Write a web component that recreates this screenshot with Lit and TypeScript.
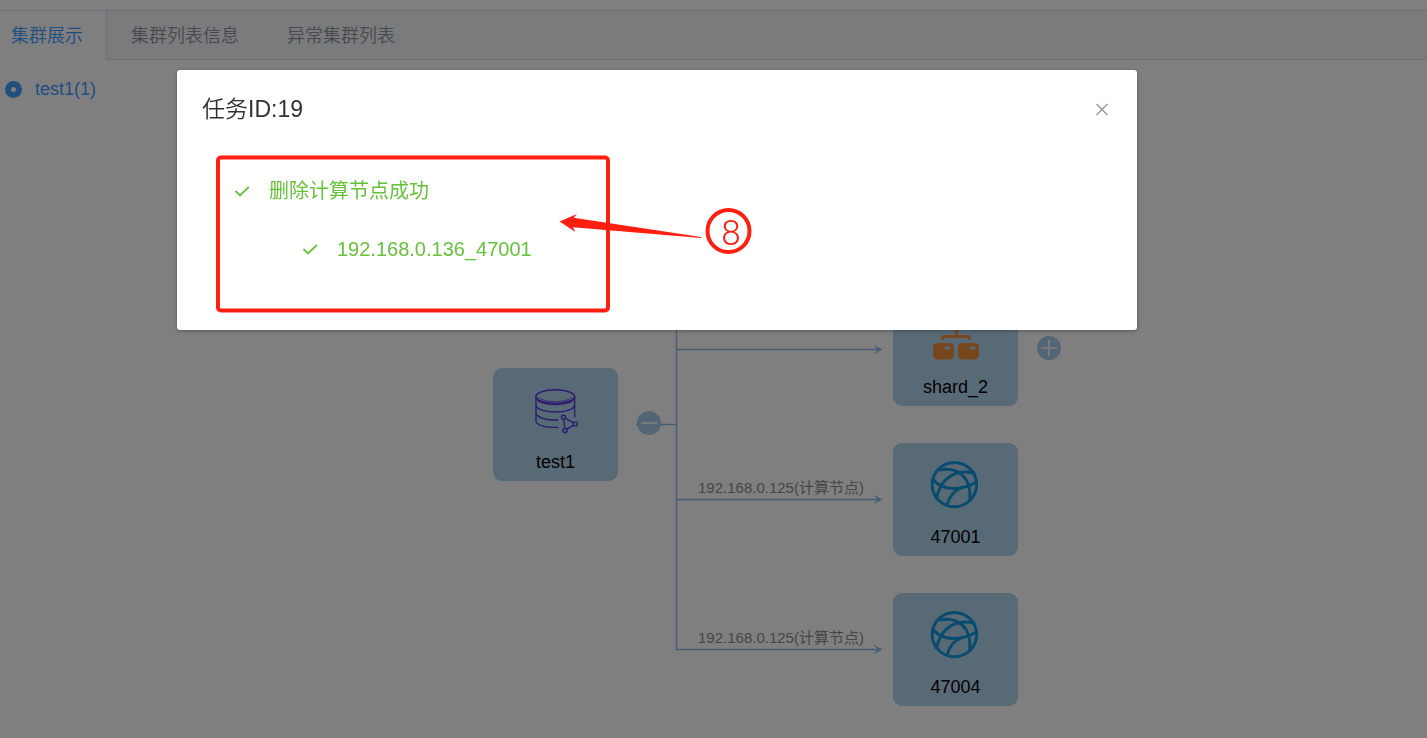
import { LitElement, html, css, svg } from "lit";
import { customElement, state } from "lit/decorators.js";
import { classMap } from "lit/directives/class-map.js";
import { styleMap } from "lit/directives/style-map.js";

type Kind = "cluster" | "shard" | "compute";

interface TopologyNode {
  x: number;
  y: number;
  kind: Kind;
  label: string;
}

interface EdgeLabel {
  x: number;
  y: number;
  text: string;
}

const NODES: TopologyNode[] = [
  { x: 313, y: 308, kind: "cluster", label: "test1" },
  { x: 713, y: 233, kind: "shard", label: "shard_2" },
  { x: 713, y: 383, kind: "compute", label: "47001" },
  { x: 713, y: 533, kind: "compute", label: "47004" },
];

const EDGE_LABELS: EdgeLabel[] = [
  { x: 518, y: 418, text: "192.168.0.125(计算节点)" },
  { x: 518, y: 568, text: "192.168.0.125(计算节点)" },
];

const EDGE_ROWS = [289, 439, 589];

const place = (x: number, y: number) => styleMap({ left: `${x}px`, top: `${y}px` });

@customElement("cluster-icon")
class ClusterIcon extends LitElement {
  static properties = { kind: { type: String } };
  declare kind: Kind;

  static styles = css`
    :host { display: block; width: 52px; height: 52px; }
    svg { display: block; overflow: visible; }
    .line { fill: none; stroke-linecap: round; stroke-linejoin: round; }
    .cluster { stroke: #5a36dc; stroke-width: 1.4; }
    .compute { stroke: #1296db; stroke-width: 3; }
    .shard { stroke: #ee903a; stroke-width: 2.8; }
    .box { fill: #ee903a; }
    .lamp { fill: #b3d5ee; }
  `;

  private shape() {
    if (this.kind === "cluster") {
      return svg`<g class="line cluster">
        <ellipse cx="25.3" cy="13.5" rx="19.3" ry="6.7"/>
        <path d="M8.5 14.5C14 20 36.5 20 42 14.5" stroke-width="0.7"/>
        <path d="M6 13.5V38.5C7.5 42.5 16 44.5 27.8 44.5M44.6 13.5V33.7"/>
        <path d="M6 14.5C8 24 42.6 24 44.6 14.5M6 22.5C8 31.2 42.6 31.2 44.6 22.5M6 30.3C7.5 35 17 37.4 27.8 37"/>
        <path d="M33.7 36.4L34.9 45.3M35.4 35.3L43.5 39.8M36.9 46.3L43.5 42.2"/>
        <circle cx="33.5" cy="34.3" r="2.1"/><circle cx="45.4" cy="41" r="2.1"/><circle cx="35.1" cy="47.4" r="2.1"/>
      </g>`;
    }
    if (this.kind === "compute") {
      return svg`<g class="line compute" transform="translate(-2 0)">
        <circle cx="26.4" cy="26.6" r="22.2"/>
        <path d="M12 12C24 9.5 33 14 38 21.5C41.5 27.5 42.4 34 41.8 41"/>
        <path d="M8.6 40C11 27.5 17.5 20 26.5 15.8C32 13.6 38 13.4 46 15"/>
        <path d="M5 21.5C11 28.5 20 31 29 30.4C37 29.5 43 27.5 48 24"/>
        <path d="M19 47C21 39 25.5 32.8 34 29.3"/>
      </g>`;
    }
    return svg`
      <rect class="box" x="16.5" y="4" width="21" height="16.5" rx="4.5"/>
      <path class="line shard" d="M26.5 23V28M12.5 31V29.8Q12.5 28.5 14 28.5H38Q39.5 28.5 39.5 29.8V31"/>
      <rect class="box" x="3" y="35" width="21" height="16.5" rx="4.5"/>
      <rect class="box" x="28" y="35" width="21" height="16.5" rx="4.5"/>
      <rect class="lamp" x="14.5" y="38.5" width="6" height="3" rx="1.5"/>
      <rect class="lamp" x="39.5" y="38.5" width="6" height="3" rx="1.5"/>`;
  }

  render() {
    return html`<svg width="52" height="52" viewBox="0 0 52 52" aria-hidden="true">${this.shape()}</svg>`;
  }
}

@customElement("cluster-topology")
class ClusterTopology extends LitElement {
  static styles = css`
    :host { display: block; position: relative; overflow: hidden; }
    .edges { position: absolute; inset: 0; width: 100%; height: 100%; }
    .wire { fill: none; stroke: #8cb6e8; stroke-width: 1.4; }
    .tip { fill: #8cb6e8; }
    .node {
      position: absolute;
      box-sizing: border-box;
      width: 125px;
      height: 113px;
      padding: 15px 0 8px;
      border-radius: 9px;
      background: #b3d5ee;
      display: flex;
      flex-direction: column;
      align-items: center;
      justify-content: space-between;
      font-size: 18px;
      line-height: 22px;
      color: #000;
    }
    .edge-label {
      position: absolute;
      font-size: 15px;
      line-height: 20px;
      white-space: nowrap;
      color: #8c8c8c;
    }
    .toggle {
      position: absolute;
      width: 24px;
      height: 24px;
      padding: 0;
      border: 0;
      border-radius: 50%;
      background: #a9cdec;
    }
    .toggle svg { display: block; stroke: #fff; stroke-width: 1.6; }
  `;

  render() {
    return html`
      <svg class="edges" aria-hidden="true">
        <path class="wire" d="M456 364.5H496.5M496.5 120V589.5"/>
        ${EDGE_ROWS.map((y) => svg`
          <path class="wire" d="M496 ${y + 0.5}H700"/>
          <path class="tip" d="M702.5 ${y + 0.5}L693 ${y - 4.5}L698 ${y + 0.5}L693 ${y + 5.5}Z"/>`)}
      </svg>
      ${EDGE_LABELS.map((e) => html`<span class="edge-label" style=${place(e.x, e.y)}>${e.text}</span>`)}
      ${NODES.map((n) => html`
        <div class="node" style=${place(n.x, n.y)}>
          <cluster-icon .kind=${n.kind}></cluster-icon>
          <span>${n.label}</span>
        </div>`)}
      <button class="toggle" aria-label="收起" style=${place(457, 351)}>
        <svg width="24" height="24"><path d="M4 12H20"/></svg>
      </button>
      <button class="toggle" aria-label="展开" style=${place(857, 276)}>
        <svg width="24" height="24"><path d="M4 12H20M12 4V20"/></svg>
      </button>
    `;
  }
}

@customElement("task-dialog")
class TaskDialog extends LitElement {
  static styles = css`
    :host {
      display: block;
      position: relative;
      box-sizing: border-box;
      min-height: 260px;
      padding: 24px 25px 0;
      border-radius: 3px;
      background: #fff;
      box-shadow: 0 1px 4px rgba(0, 0, 0, 0.3);
    }
    header { display: flex; align-items: center; justify-content: space-between; }
    h2 { margin: 0; font-size: 23px; line-height: 30px; font-weight: 350; color: #303133; }
    .close { width: 20px; height: 20px; padding: 0; border: 0; background: none; }
    .close svg { display: block; stroke: #909399; stroke-width: 1.3; }
    ul { list-style: none; margin: 0; padding: 0; color: #67c23a; }
    .steps { padding: 52px 0 0 32px; }
    .substeps { padding-left: 68px; }
    .step {
      display: flex;
      align-items: center;
      gap: 19px;
      height: 30px;
      margin-bottom: 28px;
      font-size: 20px;
      line-height: 30px;
    }
    .step svg { fill: none; stroke: #67c23a; stroke-width: 1.8; }
    .callout { position: absolute; left: 0; top: 0; pointer-events: none; }
    .mark { fill: none; stroke: #ff1f10; stroke-width: 4; }
    .arrow { fill: #ff1f10; }
    .number {
      fill: #ff1f10;
      font-family: Roboto, sans-serif;
      font-size: 35px;
      font-weight: 300;
      text-anchor: middle;
    }
  `;

  private step(text: string) {
    return html`<div class="step">
      <svg width="16" height="16" aria-hidden="true"><path d="M1.5 8L6 12.5L14.8 4"/></svg>
      <span>${text}</span>
    </div>`;
  }

  render() {
    return html`
      <header>
        <h2>任务ID:19</h2>
        <button class="close" aria-label="关闭" @click=${() => this.dispatchEvent(new CustomEvent("close"))}>
          <svg width="20" height="20"><path d="M4.5 5L15.5 16M15.5 5L4.5 16"/></svg>
        </button>
      </header>
      <ul class="steps">
        <li>
          ${this.step("删除计算节点成功")}
          <ul class="substeps">
            <li>${this.step("192.168.0.136_47001")}</li>
          </ul>
        </li>
      </ul>
      <svg class="callout" width="600" height="260">
        <rect class="mark" x="41" y="87.5" width="390" height="153" rx="3"/>
        <path class="arrow" d="M382.5 151.5L400 144L396.5 147.7L524 167V168L396 157.3L398.5 162Z"/>
        <circle class="mark" cx="551.5" cy="161" r="21"/>
        <text class="number" x="554" y="175">8</text>
      </svg>
    `;
  }
}

@customElement("app-root")
class AppRoot extends LitElement {
  @state() private activeTab = 0;
  @state() private dialogOpen = true;

  private tabs = ["集群展示", "集群列表信息", "异常集群列表"];

  static styles = css`
    :host {
      display: block;
      min-height: 100vh;
      font-family: "Liberation Sans", "Noto Sans CJK SC", sans-serif;
    }
    .page {
      box-sizing: border-box;
      min-height: 100vh;
      padding-top: 10px;
      background: #fff;
      display: flex;
      flex-direction: column;
    }
    .tabs {
      display: flex;
      height: 48px;
      border-top: 1px solid #dcdfe6;
      border-bottom: 1px solid #dcdfe6;
      background: #f5f7fa;
    }
    .tab {
      height: 49px;
      padding: 2px 24px 0;
      border: 0;
      background: none;
      font: 350 18px/47px "Liberation Sans", "Noto Sans CJK SC", sans-serif;
      color: #909399;
    }
    .tab:first-child { padding-left: 11px; }
    .tab.active {
      background: #fff;
      color: #409eff;
      box-shadow: inset -1px 0 #dcdfe6;
    }
    .content { flex: 1; display: flex; }
    .clusters { flex: 0 0 180px; padding-top: 18px; }
    .choice {
      display: flex;
      align-items: center;
      gap: 13px;
      padding-left: 5px;
      font-size: 18px;
      line-height: 22px;
      color: #409eff;
    }
    .choice input {
      appearance: none;
      box-sizing: border-box;
      width: 17px;
      height: 17px;
      margin: 0;
      border: 6px solid #409eff;
      border-radius: 50%;
      background: #fff;
    }
    cluster-topology { flex: 1; min-height: 670px; }
    .overlay {
      position: fixed;
      inset: 0;
      display: flex;
      justify-content: center;
      align-items: flex-start;
      padding: 70px 113px 0 0;
      background: rgba(0, 0, 0, 0.5);
    }
    task-dialog { flex: 0 1 960px; }
  `;

  render() {
    return html`
      <div class="page">
        <nav class="tabs" role="tablist">
          ${this.tabs.map((name, i) => html`
            <button
              role="tab"
              class=${classMap({ tab: true, active: i === this.activeTab })}
              aria-selected=${i === this.activeTab}
              @click=${() => (this.activeTab = i)}
            >${name}</button>`)}
        </nav>
        <div class="content">
          <aside class="clusters">
            <label class="choice"><input type="radio" name="cluster" checked />test1(1)</label>
          </aside>
          <cluster-topology></cluster-topology>
        </div>
      </div>
      ${this.dialogOpen
        ? html`<div class="overlay">
            <task-dialog role="dialog" aria-label="任务ID:19" @close=${() => (this.dialogOpen = false)}></task-dialog>
          </div>`
        : null}
    `;
  }
}
